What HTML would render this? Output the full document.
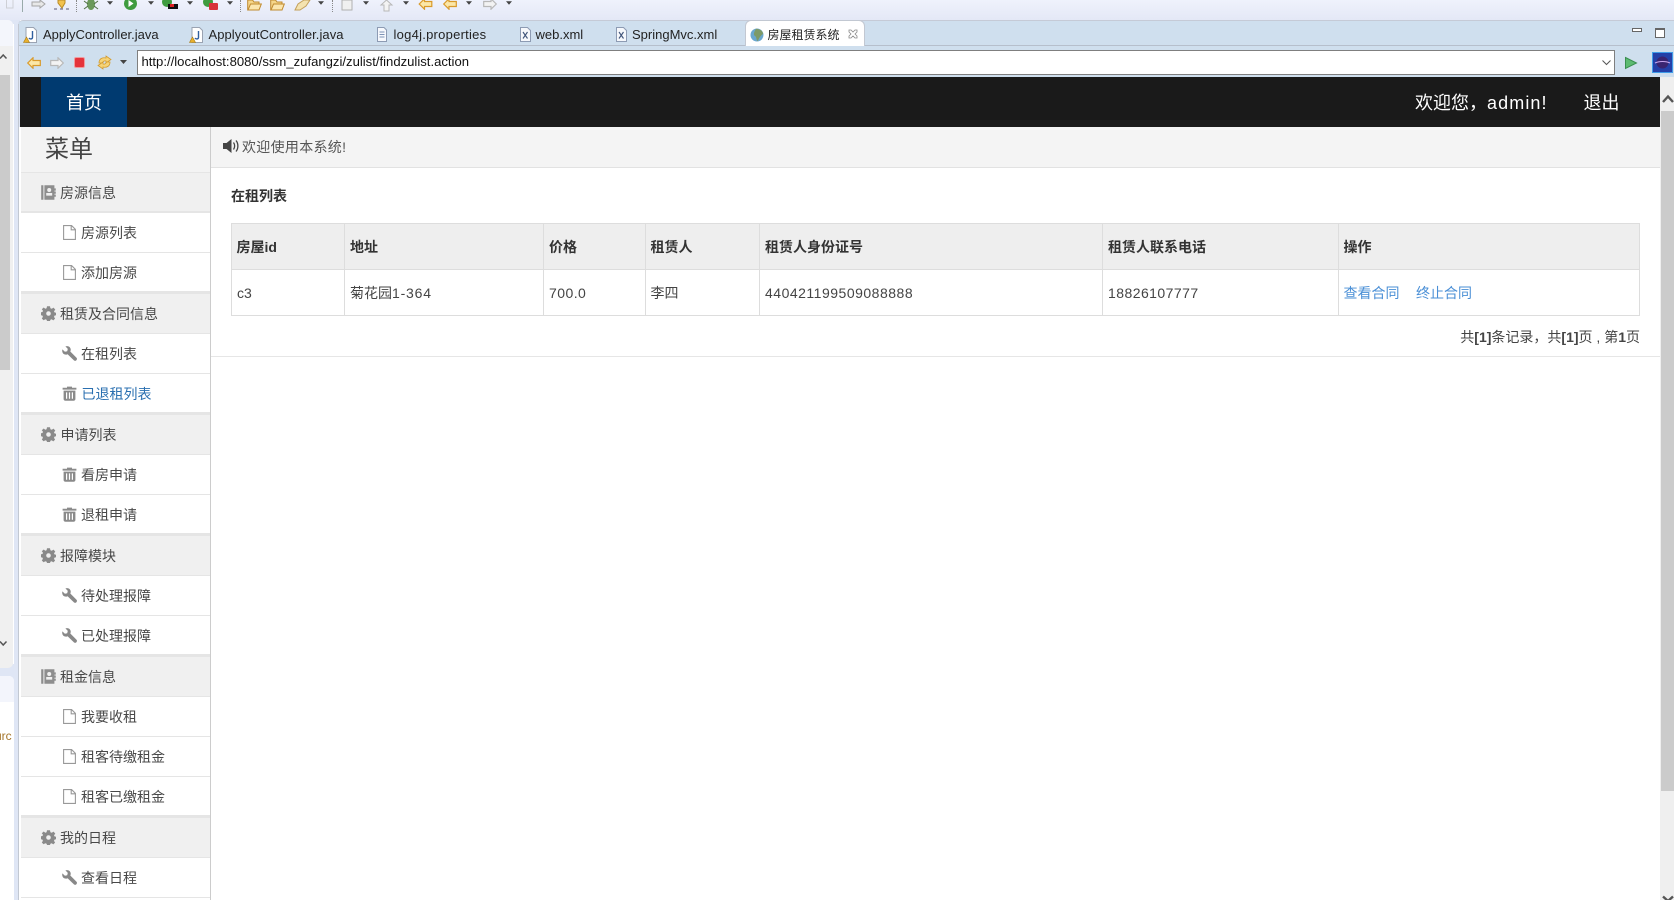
<!DOCTYPE html>
<html lang="zh"><head><meta charset="utf-8"><title>房屋租赁系统</title>
<style>
html,body{margin:0;padding:0;width:1674px;height:900px;overflow:hidden;background:#fff}
body{position:relative;font-family:"Liberation Sans","Noto Sans CJK SC",sans-serif;font-size:14px;color:#444}
.a,.a *{box-sizing:border-box}
.a{position:absolute}
svg{position:absolute;display:block;overflow:visible}
.t{position:absolute;white-space:nowrap;line-height:20px}
.h,.i{position:absolute;left:21px;width:189px;height:38.5px}
.h{background:#f0f0f0}.i{background:#fff}
.h span,.i span{position:absolute;top:0;line-height:40px;white-space:nowrap;color:#484848}
.h span{left:39px}.i span{left:60px}
.h svg{left:19.5px;top:11.5px;width:15px;height:15px;fill:#8a8a8a}
.i svg{left:40.5px;top:11.5px;width:15px;height:15px;fill:#8a8a8a}
.th,.td{position:absolute;white-space:nowrap;line-height:20px}
.th{top:237px;font-weight:bold;color:#333}
.td{top:283px;color:#444}
.n{letter-spacing:.45px}
.tab{position:absolute;top:25px;font-size:13px;line-height:20px;color:#222;white-space:nowrap}
.b{background:#ddd}
</style></head><body>
<svg width="0" height="0" style="position:absolute"><defs>
<symbol id="file" viewBox="0 0 15 15"><path d="M1.6.6H9.6L13.4 4.4V14.4H1.6Z M9.2 1V4.8H13" fill="none" stroke="#999" stroke-width="1.1"/></symbol>
<symbol id="wrench" viewBox="0 0 15 15"><path d="M.4 3.4 2.9 5.8 5.2 5.2 5.8 2.9 3.4.4C5.4-.3 7.6.4 8.4 2.2 8.9 3.4 8.8 4.6 8.3 5.5L14.4 11.6C15.2 12.4 15.2 13.4 14.4 14.2 13.6 15 12.5 15 11.8 14.3L5.6 8.2C4.6 8.8 3.3 8.8 2.2 8.3.6 7.5-.2 5.4.4 3.4Z" fill="#888"/></symbol>
<symbol id="trash" viewBox="0 0 15 15"><path fill-rule="evenodd" d="M5 .6H10V1.8H14.4V3.6H.6V1.8H5ZM1.6 4.6H13.4V13C13.4 14 12.6 14.8 11.6 14.8H3.4C2.4 14.8 1.6 14 1.6 13ZM4 6.4V12.8H5.2V6.4ZM6.9 6.4V12.8H8.1V6.4ZM9.8 6.4V12.8H11V6.4Z" fill="#8a8a8a"/></symbol>
<symbol id="gear" viewBox="0 0 15 15"><path fill-rule="evenodd" d="M6 .2H9L9.4 2.2 10.8 2.8 12.5 1.6 14.3 3.6 13 5.2 13.5 6.4 15 6.8V9.2L13.5 9.6 13 10.9 14.1 12.6 12.3 14.4 10.7 13.2 9.4 13.7 9 15H6L5.6 13.7 4.3 13.2 2.6 14.3.8 12.5 1.9 10.9 1.5 9.6 0 9.2V6.3L1.5 6 2 4.8.8 3.3 2.7 1.5 4.3 2.7 5.6 2.2ZM7.5 5.2A2.3 2.3 0 1 0 7.5 9.8 2.3 2.3 0 1 0 7.5 5.2Z" fill="#8a8a8a"/></symbol>
<symbol id="book" viewBox="0 0 15 15"><path fill-rule="evenodd" d="M.2.2H2.4V14.8H.2ZM3.4.2H13.4V3.4H14.8V5.6H13.4V6.5H14.8V8.7H13.4V9.6H14.8V11.8H13.4V14.8H3.4ZM8.2 3A2 2 0 1 0 8.2 7 2 2 0 1 0 8.2 3ZM5.2 8V10.6H11.2V8Z" fill="#8e8e8e"/></symbol>
<symbol id="jv" viewBox="0 0 14 16"><path d="M3 .5H10.5L13.5 3.5V15.5H3Z" fill="#fff" stroke="#9aa3b2"/><path d="M9.5 4V10.5C9.5 12 7 12.5 6 11" fill="none" stroke="#2f5f9f" stroke-width="1.4"/><path d="M3.5 10 6.5 15.5H.5Z" fill="#e8b02c" stroke="#a87a12" stroke-width=".6"/></symbol>
<symbol id="xm" viewBox="0 0 11 15"><path d="M.5.5H7.5L10.5 3.5V14.5H.5Z" fill="#f6f8fc" stroke="#8d9bb3"/><path d="M3 5 7.5 11.5M7.5 5 3 11.5" stroke="#40557a" stroke-width="1.1"/></symbol>
<symbol id="lf" viewBox="0 0 14 12"><path d="M.7 6 6 .8V3.5H13.3V8.5H6V11.2Z" fill="#fbe7a8" stroke="#d99a2b" stroke-width="1.2"/></symbol>
<symbol id="gf" viewBox="0 0 14 12"><path d="M13.3 6 8 .8V3.5H.7V8.5H8V11.2Z" fill="#f3f3f3" stroke="#b8b8b8" stroke-width="1.2"/></symbol>
<symbol id="dd" viewBox="0 0 7 4"><path d="M0 0H7L3.5 4Z" fill="#444"/></symbol>
<symbol id="fold" viewBox="0 0 15 12"><path d="M.7 1H5.5L7 3H12V11H.7Z" fill="#f5d68a" stroke="#c08a2e"/><path d="M3.5 5H14.3L12 11H1Z" fill="#fbe6ae" stroke="#c08a2e"/></symbol>
</defs></svg>

<!-- left IDE strip -->
<div class="a" style="left:0;top:0;width:20px;height:900px;background:#dfe6f5"></div>
<div class="a" style="left:0;top:20px;width:13px;height:648px;background:#f0f0f0;border-radius:0 5px 5px 0"></div>
<div class="a" style="left:0;top:20px;width:13px;height:26px;background:#f4f6fc;border-radius:0 5px 0 0"></div>
<div class="a" style="left:12.5px;top:24px;width:1px;height:640px;background:#fff"></div>
<div class="a" style="left:0;top:75px;width:10px;height:295px;background:#cbcbcb"></div>
<svg style="left:0;top:54px;width:7px;height:5px"><path d="M0 4.5 3.2 1 6.5 4.5" fill="none" stroke="#555" stroke-width="1.5"/></svg>
<svg style="left:0;top:641px;width:7px;height:5px"><path d="M0 .5 3.2 4 6.5 .5" fill="none" stroke="#555" stroke-width="1.5"/></svg>
<div class="a" style="left:0;top:676px;width:13.5px;height:224px;background:#fff;border-radius:0 5px 0 0"></div>
<div class="a" style="left:0;top:676px;width:13.5px;height:26px;background:#f3f5fc;border-radius:0 5px 0 0"></div>
<div class="t" style="left:-5px;top:726px;font-size:12px;color:#a5762c;line-height:20px">urc</div>

<!-- top toolbar -->
<div class="a" style="left:0;top:0;width:1674px;height:20px;background:linear-gradient(#eff2fc,#e4e8f6)"></div>
<div class="a" style="left:0;top:0;width:14px;height:11px;opacity:.45"><svg style="left:6px;top:0;width:8px;height:9px"><path d="M.5 0V8H7V0" fill="none" stroke="#aaa"/></svg></div>
<div class="a" style="left:22px;top:0;width:1px;height:12px;background:#9aa"></div>
<svg style="left:32px;top:0;width:14px;height:11px"><path d="M0 2H8V0L13 4 8 8V6H0Z" fill="#e8e8e8" stroke="#a5a5a5"/></svg>
<svg style="left:54px;top:0;width:16px;height:11px"><path d="M4 0H11V3L8 8 4 3Z" fill="#f2c24f" stroke="#b98a24"/><path d="M0 9H3M6 9H9M12 9H15" stroke="#557" /></svg>
<div class="a" style="left:76px;top:0;width:1px;height:12px;border-left:1px dotted #888"></div>
<svg style="left:84px;top:0;width:14px;height:12px"><ellipse cx="7" cy="4" rx="4" ry="6" fill="#6b9a5b"/><path d="M0 1 4 4M14 1 10 4M0 9 4 6M14 9 10 6" stroke="#4f6f44"/></svg>
<svg style="left:107px;top:1px;width:6px;height:4px"><use href="#dd"/></svg>
<svg style="left:124px;top:0;width:13px;height:11px"><circle cx="6.5" cy="3.5" r="6.5" fill="#3f9c3f"/><path d="M4.5 0 9.5 3.5 4.5 7Z" fill="#fff"/></svg>
<svg style="left:148px;top:1px;width:6px;height:4px"><use href="#dd"/></svg>
<svg style="left:162px;top:0;width:16px;height:10px"><circle cx="5" cy="2" r="5" fill="#3f9c3f"/><rect x="6" y="4" width="10" height="5" fill="#111"/><rect x="8" y="4" width="4" height="3" fill="#d22"/></svg>
<svg style="left:187px;top:1px;width:6px;height:4px"><use href="#dd"/></svg>
<svg style="left:203px;top:0;width:15px;height:11px"><circle cx="5" cy="2" r="5" fill="#3f9c3f"/><rect x="6" y="3" width="9" height="7" rx="1" fill="#d8323a"/></svg>
<svg style="left:227px;top:1px;width:6px;height:4px"><use href="#dd"/></svg>
<div class="a" style="left:240px;top:0;width:1px;height:12px;border-left:1px dotted #888"></div>
<svg style="left:247px;top:-1px;width:15px;height:12px"><use href="#fold"/></svg>
<svg style="left:270px;top:-1px;width:15px;height:12px"><use href="#fold"/></svg>
<svg style="left:294px;top:0;width:18px;height:12px"><path d="M1 10 4 4 10 0 16 0 12 6 6 10Z" fill="#f4e3b0" stroke="#c3a05b"/></svg>
<svg style="left:318px;top:1px;width:6px;height:4px"><use href="#dd"/></svg>
<div class="a" style="left:332px;top:0;width:1px;height:12px;border-left:1px dotted #888"></div>
<svg style="left:341px;top:0;width:13px;height:11px"><path d="M1 0H11V10H1Z" fill="#f0f0f0" stroke="#b0b0b0"/></svg>
<svg style="left:363px;top:1px;width:6px;height:4px"><use href="#dd"/></svg>
<svg style="left:380px;top:0;width:13px;height:11px"><path d="M6.5 0 12 5H9V11H4V5H1Z" fill="#f3f3f3" stroke="#b8b8b8"/></svg>
<svg style="left:403px;top:1px;width:6px;height:4px"><use href="#dd"/></svg>
<svg style="left:418px;top:-2px;width:15px;height:12px"><use href="#lf"/></svg>
<svg style="left:443px;top:-2px;width:14px;height:12px"><use href="#lf"/></svg>
<svg style="left:466px;top:1px;width:6px;height:4px"><use href="#dd"/></svg>
<svg style="left:483px;top:-2px;width:14px;height:12px"><use href="#gf"/></svg>
<svg style="left:506px;top:1px;width:6px;height:4px"><use href="#dd"/></svg>

<!-- tab bar -->
<div class="a" style="left:18px;top:20px;width:1656px;height:26px;background:#cfdfee;border-top:1px solid #c5cad6;border-bottom:1px solid #b6bfcc;border-top-left-radius:5px"></div>
<div class="a" style="left:18px;top:24px;width:1px;height:876px;background:#c2c8d2"></div>
<svg style="left:23px;top:27px;width:14px;height:16px"><use href="#jv"/></svg>
<div class="tab" style="left:43px">ApplyController.java</div>
<svg style="left:189px;top:27px;width:14px;height:16px"><use href="#jv"/></svg>
<div class="tab" style="left:208.5px;letter-spacing:.06px">ApplyoutController.java</div>
<svg style="left:377px;top:27px;width:10px;height:15px"><path d="M.5.5H7L9.5 3V14.5H.5Z" fill="#f7f9fd" stroke="#8d9bb3"/><path d="M2.5 5H7.5M2.5 7.5H7.5M2.5 10H7.5" stroke="#7d93b5"/></svg>
<div class="tab" style="left:393.5px;letter-spacing:.25px">log4j.properties</div>
<svg style="left:520px;top:27px;width:11px;height:15px"><use href="#xm"/></svg>
<div class="tab" style="left:535.5px">web.xml</div>
<svg style="left:616px;top:27px;width:11px;height:15px"><use href="#xm"/></svg>
<div class="tab" style="left:632px">SpringMvc.xml</div>
<div class="a" style="left:744.5px;top:20px;width:120.5px;height:27px;background:#fff;border:1px solid #c2c8d2;border-bottom:0;border-radius:6px 6px 0 0"></div>
<svg style="left:750px;top:28px;width:14px;height:14px"><circle cx="7" cy="7" r="6.5" fill="#6aa7cf"/><path d="M6 .8C10 1 13 3 13 6 11 7 9 10 8 13 6 13 7 9 5 8 3 7 4 4 6 .8Z" fill="#7d9a68"/></svg>
<div class="t" style="left:767.5px;top:25px;font-size:12px;color:#222">房屋租赁系统</div>
<svg style="left:847.5px;top:29px;width:10px;height:10px"><path d="M1 1 3 1 5 3 7 1 9 1 9 3 7 5 9 7 9 9 7 9 5 7 3 9 1 9 1 7 3 5 1 3Z" fill="#fff" stroke="#888" stroke-width=".8"/></svg>
<div class="a" style="left:1632px;top:28px;width:10px;height:4px;background:#fff;border:1px solid #666"></div>
<div class="a" style="left:1655px;top:28px;width:10px;height:10px;background:#fff;border:1px solid #666;border-top-width:2px"></div>

<!-- browser toolbar -->
<div class="a" style="left:20px;top:46px;width:1654px;height:31px;background:#cfdfee"></div>
<svg style="left:27px;top:57px;width:14px;height:12px"><use href="#lf"/></svg>
<svg style="left:50px;top:57px;width:14px;height:12px"><use href="#gf"/></svg>
<div class="a" style="left:74px;top:57px;width:11px;height:11px;background:#e5333b;border:1.5px solid #ef9a9e;border-radius:2px"></div>
<svg style="left:97px;top:55px;width:15px;height:15px"><path d="M2 8 C2 4 5 2 9 3V1L14 4.5 9 8V6C7 5.5 6 6.5 5.5 8Z" fill="#f6d478" stroke="#d39a2c" stroke-width=".8"/><path d="M13 7C13 11 10 13 6 12V14L1 10.5 6 7V9C8 9.5 9 8.5 9.5 7Z" fill="#f6d478" stroke="#d39a2c" stroke-width=".8"/></svg>
<svg style="left:120px;top:60px;width:7px;height:4px"><use href="#dd"/></svg>
<div class="a" style="left:137px;top:50px;width:1478px;height:25px;background:#fff;border:1px solid #7f7f7f"></div>
<div class="t" style="left:141.5px;top:52px;font-size:13.1px;color:#111">http://localhost:8080/ssm_zufangzi/zulist/findzulist.action</div>
<svg style="left:1602px;top:60px;width:9px;height:5px"><path d="M.5.5 4.5 4.5 8.5.5" fill="none" stroke="#555"/></svg>
<svg style="left:1625px;top:57px;width:12px;height:12px"><path d="M.5.5 11.5 6 .5 11.5Z" fill="#5dbb72" stroke="#3a8f50"/></svg>
<div class="a" style="left:1652px;top:52px;width:21px;height:21px;background:#2440a8;border:1px solid #3f9be8"></div>
<svg style="left:1654px;top:54px;width:17px;height:17px"><circle cx="8.5" cy="8.5" r="6" fill="#3a2470"/><path d="M1 9C5 7 12 7 16 9" stroke="#c8a8f0" fill="none"/></svg>

<!-- nav -->
<div class="a" style="left:20px;top:77px;width:1640px;height:50px;background:#1a1a1a"></div>
<div class="a" style="left:41px;top:77px;width:86px;height:50px;background:#003a70"></div>
<div class="t" style="left:66px;top:91px;font-size:18px;line-height:24px;color:#fff">首页</div>
<div class="t" style="left:1415px;top:91px;font-size:18px;line-height:24px;color:#fff">欢迎您&#xFF0C;<span style="letter-spacing:1.1px">admin!</span></div>
<div class="t" style="left:1583.5px;top:91px;font-size:18px;line-height:24px;color:#fff">退出</div>

<!-- scrollbar -->
<div class="a" style="left:1660px;top:77px;width:14px;height:823px;background:#efefef"></div>
<div class="a" style="left:1661px;top:111px;width:13px;height:680px;background:#cbcbcb"></div>
<svg style="left:1662px;top:94px;width:12px;height:9px"><path d="M1 8 6 2.5 11 8" fill="none" stroke="#555" stroke-width="2.4"/></svg>
<svg style="left:1662px;top:896px;width:12px;height:6px"><path d="M1 .5 6 5 11 .5" fill="none" stroke="#555" stroke-width="2.4"/></svg>

<!-- sidebar -->
<div class="a" style="left:19px;top:127px;width:2px;height:773px;background:#fff"></div>
<div class="a" style="left:21px;top:127px;width:189px;height:45px;background:#f3f3f3"></div>
<div class="t" style="left:45px;top:135px;font-size:24px;line-height:30px;color:#444">菜单</div>
<div class="a" style="left:21px;top:172px;width:189px;height:728px;background:#e5e5e5"></div>
<div class="a" style="left:210px;top:127px;width:1px;height:773px;background:#ccc"></div>

<div class="h" style="top:173px;height:38px"><svg><use href="#book"/></svg><span>房源信息</span></div>
<div class="i" style="top:213px"><svg><use href="#file"/></svg><span>房源列表</span></div>
<div class="i" style="top:253px;height:38px"><svg><use href="#file"/></svg><span>添加房源</span></div>

<div class="h" style="top:294px"><svg><use href="#gear"/></svg><span>租赁及合同信息</span></div>
<div class="i" style="top:334px"><svg><use href="#wrench"/></svg><span>在租列表</span></div>
<div class="i" style="top:374px;height:38px"><svg><use href="#trash"/></svg><span style="left:60.5px;color:#2a6fb0">已退租列表</span></div>

<div class="h" style="top:415px"><svg><use href="#gear"/></svg><span style="left:39.5px">申请列表</span></div>
<div class="i" style="top:455px"><svg><use href="#trash"/></svg><span>看房申请</span></div>
<div class="i" style="top:495px;height:38px"><svg><use href="#trash"/></svg><span>退租申请</span></div>

<div class="h" style="top:536px"><svg><use href="#gear"/></svg><span>报障模块</span></div>
<div class="i" style="top:576px"><svg><use href="#wrench"/></svg><span>待处理报障</span></div>
<div class="i" style="top:616px;height:38px"><svg><use href="#wrench"/></svg><span>已处理报障</span></div>

<div class="h" style="top:657px"><svg><use href="#book"/></svg><span>租金信息</span></div>
<div class="i" style="top:697px"><svg><use href="#file"/></svg><span>我要收租</span></div>
<div class="i" style="top:737px"><svg><use href="#file"/></svg><span>租客待缴租金</span></div>
<div class="i" style="top:777px;height:38px"><svg><use href="#file"/></svg><span>租客已缴租金</span></div>

<div class="h" style="top:818px"><svg><use href="#gear"/></svg><span>我的日程</span></div>
<div class="i" style="top:858px"><svg><use href="#wrench"/></svg><span>查看日程</span></div>
<div class="i" style="top:898px;height:2px"></div>

<!-- content -->
<div class="a" style="left:211px;top:127px;width:1449px;height:40px;background:#f4f4f4"></div>
<div class="a" style="left:211px;top:167px;width:1449px;height:1px;background:#e2e2e2"></div>
<svg style="left:222.5px;top:139px;width:16px;height:14px"><path d="M0 4H3.5L8.5 0V14L3.5 10H0Z" fill="#444"/><path d="M10.5 3.5C12 5.5 12 8.5 10.5 10.5M13 1.5C15.5 4.5 15.5 9.5 13 12.5" fill="none" stroke="#444" stroke-width="1.3"/></svg>
<div class="t" style="left:242px;top:137px;color:#555;letter-spacing:.3px">欢迎使用本系统!</div>
<div class="t" style="left:231px;top:186px;font-weight:bold;color:#333">在租列表</div>

<div class="a" style="left:231px;top:223px;width:1409px;height:47px;background:#eee"></div>
<div class="a b" style="left:231px;top:223px;width:1409px;height:1px"></div>
<div class="a b" style="left:231px;top:269px;width:1409px;height:1px"></div>
<div class="a b" style="left:231px;top:315px;width:1409px;height:1px"></div>
<div class="a b" style="left:231px;top:223px;width:1px;height:93px"></div>
<div class="a b" style="left:344px;top:223px;width:1px;height:93px"></div>
<div class="a b" style="left:543px;top:223px;width:1px;height:93px"></div>
<div class="a b" style="left:645px;top:223px;width:1px;height:93px"></div>
<div class="a b" style="left:759px;top:223px;width:1px;height:93px"></div>
<div class="a b" style="left:1102px;top:223px;width:1px;height:93px"></div>
<div class="a b" style="left:1338px;top:223px;width:1px;height:93px"></div>
<div class="a b" style="left:1639px;top:223px;width:1px;height:93px"></div>

<div class="th" style="left:236.5px">房屋id</div>
<div class="th" style="left:350px">地址</div>
<div class="th" style="left:549px">价格</div>
<div class="th" style="left:650.5px">租赁人</div>
<div class="th" style="left:765px">租赁人身份证号</div>
<div class="th" style="left:1108px">租赁人联系电话</div>
<div class="th" style="left:1343.5px">操作</div>

<div class="td" style="left:237px">c3</div>
<div class="td" style="left:350px">菊花园<span style="letter-spacing:.8px">1-364</span></div>
<div class="td n" style="left:549px">700.0</div>
<div class="td" style="left:650.5px">李四</div>
<div class="td" style="left:765px;letter-spacing:.5px">440421199509088888</div>
<div class="td n" style="left:1108px">18826107777</div>
<div class="td" style="left:1343.5px;color:#4a8fd6">查看合同</div>
<div class="td" style="left:1416px;color:#4a8fd6">终止合同</div>

<div class="t" style="right:34px;top:327px;color:#444">共<b>[1]</b>条记录&#xFF0C;共<b>[1]</b>页 , 第<b>1</b>页</div>
<div class="a" style="left:211px;top:355.5px;width:1449px;height:1.5px;background:#e6e6e6"></div>
</body></html>
